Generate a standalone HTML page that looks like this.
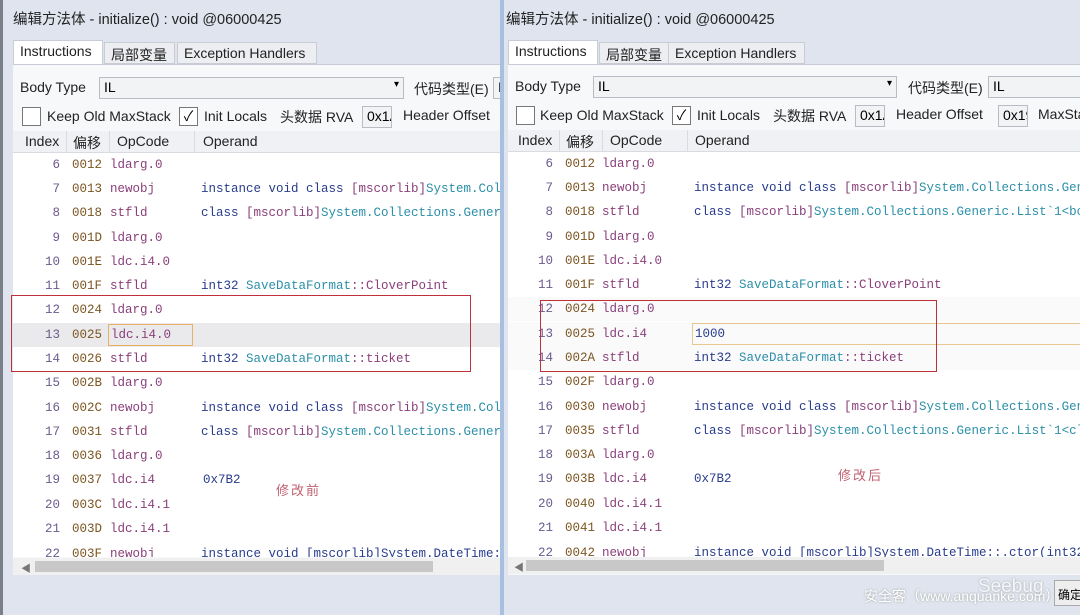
<!DOCTYPE html>
<html><head><meta charset="utf-8"><style>
*{margin:0;padding:0;box-sizing:border-box}
body{width:1080px;height:615px;overflow:hidden;background:#dde2ec;font-family:"Liberation Sans","Noto Sans CJK SC",sans-serif;position:relative}
.p{position:absolute;top:0;height:615px;overflow:hidden;background:#dfe4ee}
.t{position:absolute;left:10px;top:8px;font-size:14.5px;color:#222}
.tabs{position:absolute;top:40px;left:10px;height:24px;font-size:14px}
.tab{position:absolute;top:2px;height:22px;border:1px solid #c8ccd4;background:#eceef2;padding:2px 6px;color:#222;white-space:nowrap}
.tab.a{top:0;height:25px;background:#fff;border-bottom:none}
.body{position:absolute;top:64px;left:10px;right:0;bottom:40px;background:#f7f8fa;border-top:1px solid #c8ccd4}
.lbl{position:absolute;font-size:14px;color:#222;white-space:nowrap}
.inp{position:absolute;border:1px solid #b8bcc4;background:#f2f3f5;height:22px;font-size:14px;padding:1px 4px}
.cb{position:absolute;width:19px;height:19px;border:1px solid #777;background:#fff;font-size:14px;line-height:17px;text-align:center}
.hdr{position:absolute;top:131px;height:22px;left:10px;right:0;background:#f0f1f4;border-bottom:1px solid #d8dbe0;font-size:14px;color:#222}
.hdr span{position:absolute;top:2px}
.hdr i{position:absolute;top:0;width:1px;height:22px;background:#d8dbe0}
.grid{position:absolute;top:153px;left:10px;right:0;height:404px;background:#fff;overflow:hidden}
.r{position:absolute;left:0;right:0;height:24px;font-family:"Liberation Mono",monospace;font-size:12.5px;line-height:24px;white-space:nowrap}
.r span{position:absolute}
.ix{color:#6b5a8e;text-align:right;width:24px}
.of{color:#7b5520}
.op{color:#8a3f7a}
.k{color:#283c8c}.ty{color:#2b8fa8}.m{color:#8a3f7a}
.sb{position:absolute;top:558px;left:10px;right:0;height:17px;background:#f0f0f0}
.sb .th{position:absolute;top:3px;left:22px;height:11px;background:#c8c8c8}
.red{position:absolute;border:1px solid #c0303a}
.note{position:absolute;font-size:13px;color:#c06070;letter-spacing:2px}
b{font-weight:normal}
</style></head><body>

<!-- LEFT PANEL -->
<div class="p" style="left:0;width:502px;border-left:3px solid #7a7f88">
<div class="t">编辑方法体 - initialize() : void @06000425</div>
<div class="tabs"><div class="tab a" style="left:0;width:90px">Instructions</div><div class="tab" style="left:91px;width:71px">局部变量</div><div class="tab" style="left:164px;width:140px">Exception Handlers</div></div>
<div class="body"></div>
<div class="lbl" style="left:17px;top:79px">Body Type</div>
<div class="inp" style="left:96px;top:77px;width:305px">IL<span style="position:absolute;right:4px;top:1px;font-size:10px">▾</span></div>
<div class="lbl" style="left:411px;top:79px">代码类型(E)</div>
<div class="inp" style="left:490px;top:77px;width:20px">IL</div>
<div class="cb" style="left:19px;top:107px"></div>
<div class="lbl" style="left:44px;top:108px">Keep Old MaxStack</div>
<div class="cb" style="left:176px;top:107px">✓</div>
<div class="lbl" style="left:201px;top:108px">Init Locals</div>
<div class="lbl" style="left:277px;top:107px">头数据 RVA</div>
<div class="inp" style="left:359px;top:106px;width:30px;overflow:hidden">0x1A</div>
<div class="lbl" style="left:400px;top:107px">Header Offset</div>
<div class="hdr"><span style="left:12px">Index</span><i style="left:53px"></i><span style="left:60px">偏移</span><i style="left:96px"></i><span style="left:104px">OpCode</span><i style="left:181px"></i><span style="left:190px">Operand</span></div>
<div class="grid">
<div class="r" style="top:0"><span class="ix" style="left:23px">6</span><span class="of" style="left:59px">0012</span><span class="op" style="left:97px">ldarg.0</span></div>
<div class="r" style="top:24px"><span class="ix" style="left:23px">7</span><span class="of" style="left:59px">0013</span><span class="op" style="left:97px">newobj</span><span style="left:188px"><b class="k">instance void class </b><b class="m">[mscorlib]</b><b class="ty">System.Coll</b></span></div>
<div class="r" style="top:48px"><span class="ix" style="left:23px">8</span><span class="of" style="left:59px">0018</span><span class="op" style="left:97px">stfld</span><span style="left:188px"><b class="k">class </b><b class="m">[mscorlib]</b><b class="ty">System.Collections.Generi</b></span></div>
<div class="r" style="top:73px"><span class="ix" style="left:23px">9</span><span class="of" style="left:59px">001D</span><span class="op" style="left:97px">ldarg.0</span></div>
<div class="r" style="top:97px"><span class="ix" style="left:23px">10</span><span class="of" style="left:59px">001E</span><span class="op" style="left:97px">ldc.i4.0</span></div>
<div class="r" style="top:121px"><span class="ix" style="left:23px">11</span><span class="of" style="left:59px">001F</span><span class="op" style="left:97px">stfld</span><span style="left:188px"><b class="k">int32 </b><b class="ty">SaveDataFormat</b><b class="m">::CloverPoint</b></span></div>
<div class="r" style="top:145px"><span class="ix" style="left:23px">12</span><span class="of" style="left:59px">0024</span><span class="op" style="left:97px">ldarg.0</span></div>
<div class="r" style="top:170px;background:#eaeaec"><span class="ix" style="left:23px">13</span><span class="of" style="left:59px">0025</span><span class="op" style="left:95px;top:1px;width:85px;height:22px;line-height:20px;border:1px solid #e8b060;padding-left:2px">ldc.i4.0</span></div>
<div class="r" style="top:194px"><span class="ix" style="left:23px">14</span><span class="of" style="left:59px">0026</span><span class="op" style="left:97px">stfld</span><span style="left:188px"><b class="k">int32 </b><b class="ty">SaveDataFormat</b><b class="m">::ticket</b></span></div>
<div class="r" style="top:218px"><span class="ix" style="left:23px">15</span><span class="of" style="left:59px">002B</span><span class="op" style="left:97px">ldarg.0</span></div>
<div class="r" style="top:243px"><span class="ix" style="left:23px">16</span><span class="of" style="left:59px">002C</span><span class="op" style="left:97px">newobj</span><span style="left:188px"><b class="k">instance void class </b><b class="m">[mscorlib]</b><b class="ty">System.Coll</b></span></div>
<div class="r" style="top:267px"><span class="ix" style="left:23px">17</span><span class="of" style="left:59px">0031</span><span class="op" style="left:97px">stfld</span><span style="left:188px"><b class="k">class </b><b class="m">[mscorlib]</b><b class="ty">System.Collections.Generi</b></span></div>
<div class="r" style="top:291px"><span class="ix" style="left:23px">18</span><span class="of" style="left:59px">0036</span><span class="op" style="left:97px">ldarg.0</span></div>
<div class="r" style="top:315px"><span class="ix" style="left:23px">19</span><span class="of" style="left:59px">0037</span><span class="op" style="left:97px">ldc.i4</span><span class="k" style="left:190px">0x7B2</span></div>
<div class="r" style="top:340px"><span class="ix" style="left:23px">20</span><span class="of" style="left:59px">003C</span><span class="op" style="left:97px">ldc.i4.1</span></div>
<div class="r" style="top:364px"><span class="ix" style="left:23px">21</span><span class="of" style="left:59px">003D</span><span class="op" style="left:97px">ldc.i4.1</span></div>
<div class="r" style="top:389px"><span class="ix" style="left:23px">22</span><span class="of" style="left:59px">003F</span><span class="op" style="left:97px">newobj</span><span class="k" style="left:188px">instance void [mscorlib]System.DateTime::</span></div>
</div>
<div class="sb"><span style="position:absolute;left:8px;top:2px;font-size:10px;color:#777">◀</span><div class="th" style="width:398px"></div></div>
<div class="red" style="left:8px;top:295px;width:460px;height:77px"></div>
<div class="note" style="left:273px;top:480px">修改前</div>
</div>
<div style="position:absolute;left:500px;top:0;width:4px;height:615px;background:#a8c0e0"></div>

<!-- RIGHT PANEL -->
<div class="p" style="left:504px;width:576px">
<div class="t" style="left:2px">编辑方法体 - initialize() : void @06000425</div>
<div class="tabs" style="left:4px"><div class="tab a" style="left:0;width:90px">Instructions</div><div class="tab" style="left:91px;width:71px">局部变量</div><div class="tab" style="left:160px;width:137px">Exception Handlers</div></div>
<div class="body" style="left:4px"></div>
<div class="lbl" style="left:11px;top:78px">Body Type</div>
<div class="inp" style="left:89px;top:76px;width:304px">IL<span style="position:absolute;right:4px;top:1px;font-size:10px">▾</span></div>
<div class="lbl" style="left:404px;top:78px">代码类型(E)</div>
<div class="inp" style="left:484px;top:76px;width:100px">IL</div>
<div class="cb" style="left:12px;top:106px"></div>
<div class="lbl" style="left:36px;top:107px">Keep Old MaxStack</div>
<div class="cb" style="left:168px;top:106px">✓</div>
<div class="lbl" style="left:193px;top:107px">Init Locals</div>
<div class="lbl" style="left:269px;top:106px">头数据 RVA</div>
<div class="inp" style="left:351px;top:105px;width:30px;overflow:hidden">0x1A</div>
<div class="lbl" style="left:392px;top:106px">Header Offset</div>
<div class="inp" style="left:494px;top:105px;width:30px;overflow:hidden">0x19</div>
<div class="lbl" style="left:534px;top:106px">MaxStack</div>
<div class="hdr" style="left:4px;top:130px"><span style="left:10px">Index</span><i style="left:51px"></i><span style="left:58px">偏移</span><i style="left:94px"></i><span style="left:102px">OpCode</span><i style="left:179px"></i><span style="left:187px">Operand</span></div>
<div class="grid" style="left:4px;top:152px;height:405px">
<div class="r" style="top:0"><span class="ix" style="left:21px">6</span><span class="of" style="left:57px">0012</span><span class="op" style="left:94px">ldarg.0</span></div>
<div class="r" style="top:24px"><span class="ix" style="left:21px">7</span><span class="of" style="left:57px">0013</span><span class="op" style="left:94px">newobj</span><span style="left:186px"><b class="k">instance void class </b><b class="m">[mscorlib]</b><b class="ty">System.Collections.Gen</b></span></div>
<div class="r" style="top:48px"><span class="ix" style="left:21px">8</span><span class="of" style="left:57px">0018</span><span class="op" style="left:94px">stfld</span><span style="left:186px"><b class="k">class </b><b class="m">[mscorlib]</b><b class="ty">System.Collections.Generic.List`1&lt;bo</b></span></div>
<div class="r" style="top:73px"><span class="ix" style="left:21px">9</span><span class="of" style="left:57px">001D</span><span class="op" style="left:94px">ldarg.0</span></div>
<div class="r" style="top:97px"><span class="ix" style="left:21px">10</span><span class="of" style="left:57px">001E</span><span class="op" style="left:94px">ldc.i4.0</span></div>
<div class="r" style="top:121px"><span class="ix" style="left:21px">11</span><span class="of" style="left:57px">001F</span><span class="op" style="left:94px">stfld</span><span style="left:186px"><b class="k">int32 </b><b class="ty">SaveDataFormat</b><b class="m">::CloverPoint</b></span></div>
<div class="r" style="top:145px;background:#fafafb"><span class="ix" style="left:21px">12</span><span class="of" style="left:57px">0024</span><span class="op" style="left:94px">ldarg.0</span></div>
<div class="r" style="top:170px;background:#fafafb"><span class="ix" style="left:21px">13</span><span class="of" style="left:57px">0025</span><span class="op" style="left:94px">ldc.i4</span><span class="k" style="left:184px;top:1px;width:400px;height:22px;line-height:20px;border:1px solid #e8c890;padding-left:2px">1000</span></div>
<div class="r" style="top:194px;background:#fafafb"><span class="ix" style="left:21px">14</span><span class="of" style="left:57px">002A</span><span class="op" style="left:94px">stfld</span><span style="left:186px"><b class="k">int32 </b><b class="ty">SaveDataFormat</b><b class="m">::ticket</b></span></div>
<div class="r" style="top:218px"><span class="ix" style="left:21px">15</span><span class="of" style="left:57px">002F</span><span class="op" style="left:94px">ldarg.0</span></div>
<div class="r" style="top:243px"><span class="ix" style="left:21px">16</span><span class="of" style="left:57px">0030</span><span class="op" style="left:94px">newobj</span><span style="left:186px"><b class="k">instance void class </b><b class="m">[mscorlib]</b><b class="ty">System.Collections.Gen</b></span></div>
<div class="r" style="top:267px"><span class="ix" style="left:21px">17</span><span class="of" style="left:57px">0035</span><span class="op" style="left:94px">stfld</span><span style="left:186px"><b class="k">class </b><b class="m">[mscorlib]</b><b class="ty">System.Collections.Generic.List`1&lt;cl</b></span></div>
<div class="r" style="top:291px"><span class="ix" style="left:21px">18</span><span class="of" style="left:57px">003A</span><span class="op" style="left:94px">ldarg.0</span></div>
<div class="r" style="top:315px"><span class="ix" style="left:21px">19</span><span class="of" style="left:57px">003B</span><span class="op" style="left:94px">ldc.i4</span><span class="k" style="left:186px">0x7B2</span></div>
<div class="r" style="top:340px"><span class="ix" style="left:21px">20</span><span class="of" style="left:57px">0040</span><span class="op" style="left:94px">ldc.i4.1</span></div>
<div class="r" style="top:364px"><span class="ix" style="left:21px">21</span><span class="of" style="left:57px">0041</span><span class="op" style="left:94px">ldc.i4.1</span></div>
<div class="r" style="top:389px"><span class="ix" style="left:21px">22</span><span class="of" style="left:57px">0042</span><span class="op" style="left:94px">newobj</span><span class="k" style="left:186px">instance void [mscorlib]System.DateTime::.ctor(int32</span></div>
</div>
<div class="sb" style="left:4px;top:557px"><span style="position:absolute;left:6px;top:2px;font-size:10px;color:#777">◀</span><div class="th" style="left:18px;width:358px"></div></div>
<div class="red" style="left:36px;top:300px;width:397px;height:72px"></div>
<div class="note" style="left:334px;top:465px">修改后</div>
<div style="position:absolute;left:360px;top:586px;font-size:14px;color:#fff;text-shadow:0 0 2px #999">安全客（www.anquanke.com）</div>
<div style="position:absolute;left:474px;top:576px;font-size:19px;color:#fff;opacity:.7;text-shadow:0 0 2px #888">Seebug</div>
<div style="position:absolute;left:550px;top:580px;width:40px;height:26px;border:1px solid #aaa;background:#eee;font-size:12px;padding:5px 3px">确定</div>
</div>
</body></html>
